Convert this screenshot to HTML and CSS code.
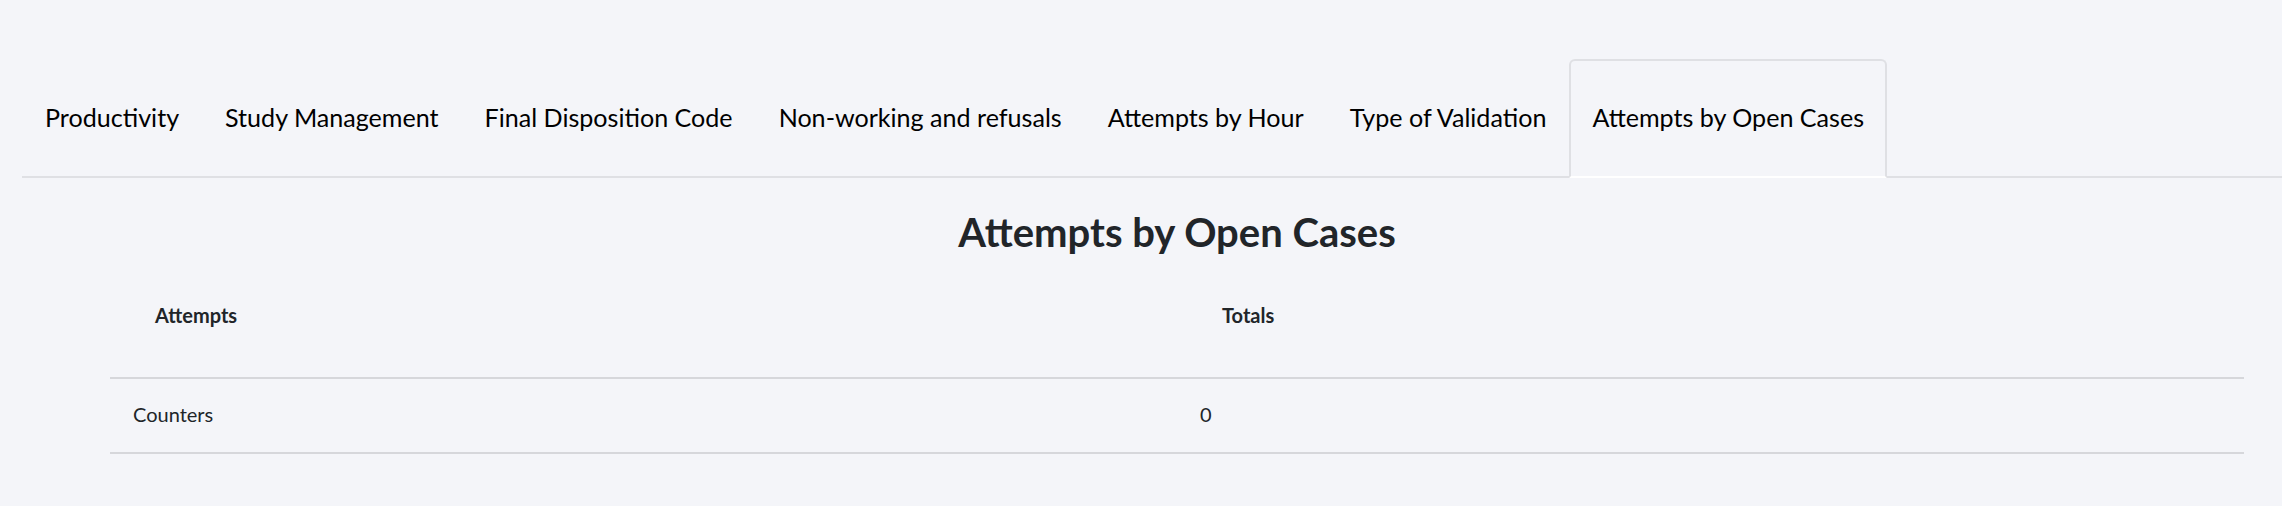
FILE: index.html
```html
<!DOCTYPE html>
<html lang="en">
<head>
<meta charset="utf-8">
<title>Attempts by Open Cases</title>
<link rel="stylesheet" href="styles.css">
</head>
<body>
<div class="page">
  <ul class="tabs">
    <li class="tab">Productivity</li>
    <li class="tab">Study Management</li>
    <li class="tab">Final Disposition Code</li>
    <li class="tab">Non-working and refusals</li>
    <li class="tab">Attempts by Hour</li>
    <li class="tab">Type of Validation</li>
    <li class="tab active">Attempts by Open Cases</li>
  </ul>
  <div class="content">
    <h2 class="title">Attempts by Open Cases</h2>
    <table class="grid">
      <thead>
        <tr><th>Attempts</th><th>Totals</th></tr>
      </thead>
      <tbody>
        <tr><td>Counters</td><td>0</td></tr>
      </tbody>
    </table>
  </div>
</div>
</body>
</html>
```

FILE: styles.css
```css
html, body {
  margin: 0;
  padding: 0;
  background: #f4f5f9;
}
body {
  font-family: Lato, "Liberation Sans", sans-serif;
  color: #212529;
}
.page {
  padding-top: 59px;
}
.tabs {
  list-style: none;
  margin: 0 0 0 22px;
  padding: 0;
  display: flex;
  border-bottom: 2px solid #dfe0e4;
}
.tab {
  font-size: 25.1px;
  line-height: 39px;
  padding: 37px 21px 39px;
  border: 2px solid transparent;
  border-radius: 6px 6px 0 0;
  margin-bottom: -2px;
  color: #000;
}
.tab.active {
  border-color: #dfe0e4 #dfe0e4 #ffffff;
}
.content {
  margin: 0 38px 0 110px;
}
.title {
  margin: 30px 0 0;
  font-size: 40px;
  line-height: 48px;
  font-weight: 700;
  text-align: center;
  color: #212529;
}
.grid {
  width: 100%;
  border-collapse: collapse;
  table-layout: fixed;
}
.grid th {
  text-align: left;
  font-size: 20px;
  line-height: 24px;
  font-weight: 700;
  padding: 47px 23px 50px 45px;
  vertical-align: top;
  border-bottom: 2px solid #d6d7db;
}
.grid td {
  text-align: left;
  font-size: 20px;
  line-height: 24px;
  padding: 23px 23px 26px;
  border-bottom: 2px solid #d6d7db;
}
```
